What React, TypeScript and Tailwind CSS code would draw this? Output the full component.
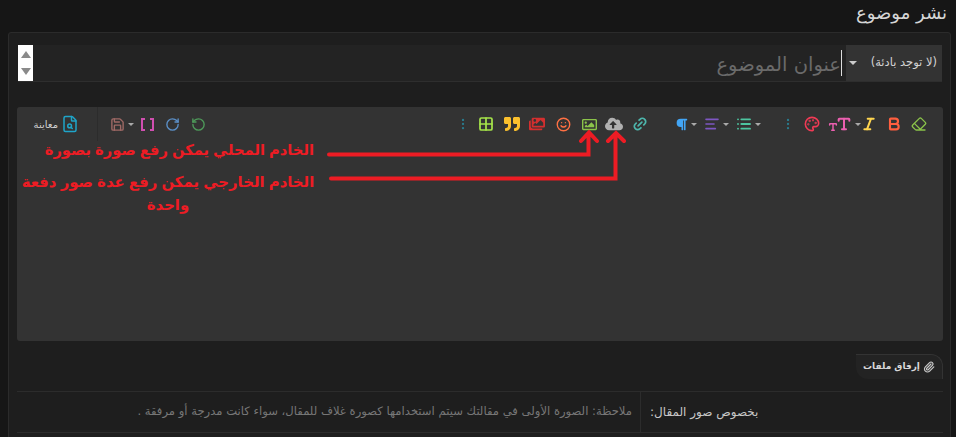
import { Bold, Eraser, FileSearch, Grid2x2, Italic, Link2, List, AlignLeft, Palette, Paperclip, RotateCcw, RotateCw, Save, Smile, Type, EllipsisVertical } from "lucide-react";
import { FaCloudUploadAlt, FaImages, FaParagraph, FaQuoteRight, FaRegImage } from "react-icons/fa";
import type { ReactNode } from "react";

function Caret() {
  return <span className="ml-[3px] inline-block h-0 w-0 border-x-[3px] border-t-[3px] border-x-transparent border-t-[#aaaaaa]" />;
}

function Tool({ className, children, caret }: { className: string; children: ReactNode; caret?: boolean }) {
  return (
    <div dir="ltr" className={`flex h-full shrink-0 items-center justify-center ${className}`}>
      {children}
      {caret && <Caret />}
    </div>
  );
}

export default function App() {
  return (
    <div dir="rtl" className="relative h-[437px] w-[956px] overflow-hidden bg-[#161616] font-['DejaVu_Sans',sans-serif] text-[#cccccc]">
      <h1 className="h-[32px] ps-[9px] text-[18px] leading-[25px] font-normal text-[#d6d6d6]">نشر موضوع</h1>

      <div className="ml-[8px] mr-[5px] h-[420px] rounded-t-[3px] border border-[#2b2b2b] bg-[#1e1e1e] pl-[9px] pr-[8px] pt-[12px]">
        <div className="flex h-[37px] border-b border-[#2e2e2e] bg-[#232323]">
          <div className="flex w-[96px] shrink-0 items-center justify-between bg-[#333333] pe-[3px] ps-[5px] text-[11.5px] text-[#d4d4d4]">
            <span>(لا توجد بادئة)</span>
            <span className="h-0 w-0 border-x-[4px] border-t-[4px] border-x-transparent border-t-[#cccccc]" />
          </div>
          <div className="flex flex-1 items-center ps-[4px]">
            <span className="h-[26px] w-px bg-[#dddddd]" />
            <span className="pt-[3px] text-[19.5px] leading-[26px] text-[#6a6a6a]">عنوان الموضوع</span>
          </div>
          <div className="flex w-[15px] shrink-0 flex-col items-center justify-between bg-white py-[6px]">
            <span className="h-0 w-0 border-x-[5px] border-b-[7px] border-x-transparent border-b-[#8a8a8a]" />
            <span className="h-0 w-0 border-x-[5px] border-t-[7px] border-x-transparent border-t-[#8a8a8a]" />
          </div>
        </div>

        <div className="-ml-px -mr-px mt-[25px] h-[234px] rounded-[3px] bg-[#333333]">
          <div className="flex h-[34px] items-center ps-[11px]">
            <Tool className="w-[26px]"><Eraser size={16} className="text-[#8bc34a]" /></Tool>
            <Tool className="w-[24px]"><Bold size={16} strokeWidth={3.2} className="text-[#ff5f3f]" /></Tool>
            <Tool className="w-[26px]"><Italic size={16} strokeWidth={3} className="text-[#ffd54f]" /></Tool>
            <Tool className="w-[24px]" caret>
              <span className="flex items-end text-[#ec5fb0]">
                <Type size={10} strokeWidth={3.5} />
                <Type size={16} strokeWidth={3} className="-ml-[2px]" />
              </span>
            </Tool>
            <Tool className="w-[40px]"><Palette size={16} strokeWidth={2.4} className="text-[#f23a55]" /></Tool>
            <Tool className="w-[8px]"><EllipsisVertical size={14} className="shrink-0 text-[#2a7a8c]" /></Tool>
            <div className="w-[21px] shrink-0" />
            <Tool className="w-[30px]" caret><List size={16} strokeWidth={2.8} className="text-[#4dc5a0]" /></Tool>
            <Tool className="w-[34px]" caret><AlignLeft size={16} strokeWidth={2.4} className="text-[#7e57c2]" /></Tool>
            <Tool className="w-[26px]" caret><FaParagraph size={13} className="text-[#42a5f5]" /></Tool>
            <div className="w-[19px] shrink-0" />
            <Tool className="w-[28px]"><Link2 size={16} strokeWidth={2.6} className="-rotate-45 text-[#4db6ac]" /></Tool>
            <Tool className="w-[24px]"><FaCloudUploadAlt size={18} className="text-[#b0b0b0]" /></Tool>
            <Tool className="w-[26px]"><FaRegImage size={15} className="text-[#8bc34a]" /></Tool>
            <Tool className="w-[26px]"><Smile size={15} strokeWidth={2.2} className="text-[#ff7043]" /></Tool>
            <Tool className="w-[26px]"><FaImages size={16} className="text-[#d32f2f]" /></Tool>
            <Tool className="w-[24px]"><FaQuoteRight size={16} className="text-[#fbc02d]" /></Tool>
            <Tool className="w-[28px]"><Grid2x2 size={16} strokeWidth={2.6} className="text-[#a5e34a]" /></Tool>
            <Tool className="w-[18px]"><EllipsisVertical size={14} className="text-[#2a7a8c]" /></Tool>
            <div className="flex-1" />
            <Tool className="w-[26px]"><RotateCcw size={15} strokeWidth={2.2} className="text-[#4e9a5a]" /></Tool>
            <Tool className="w-[26px]"><RotateCw size={15} strokeWidth={2.2} className="text-[#5b8fc7]" /></Tool>
            <Tool className="w-[24px]">
              <svg width="13" height="13" viewBox="0 0 13 13" fill="none" stroke="#d04fb0" strokeWidth="2">
                <path d="M4 1H1V12H4M9 1H12V12H9" />
              </svg>
            </Tool>
            <Tool className="w-[26px]" caret><Save size={15} strokeWidth={2.2} className="text-[#a06a66]" /></Tool>
            <div className="w-[11px] shrink-0" />
            <div className="h-full w-px bg-[#2c2c2c]" />
            <div className="flex w-[80px] items-center gap-[3px] ps-[18px]">
              <FileSearch size={18} className="text-[#1fa5c9]" />
              <span className="text-[10px] text-[#cfcfcf]">معاينة</span>
            </div>
          </div>
        </div>

        <div className="-mr-px mt-[13px] flex">
          <div className="flex h-[25px] w-[87px] items-center justify-center gap-[3px] rounded-tr-[12px] rounded-bl-[12px] border-t border-r border-[#333333] bg-[#232323] text-[9px] font-bold text-[#d8d8d8]">
            <Paperclip size={12} strokeWidth={2.4} className="text-[#c8c8c8]" />
            <span>إرفاق ملفات</span>
          </div>
        </div>

        <div className="-ml-px -mr-px mt-[12px] flex h-[42px] border-y border-[#2c2c2c]">
          <div className="flex w-[303px] shrink-0 items-center justify-end border-l border-[#2c2c2c] pl-[9px] text-[12px] text-[#c8c8c8]">
            بخصوص صور المقال:
          </div>
          <div className="flex flex-1 items-center ps-[8px] text-[11.6px] whitespace-nowrap text-[#777777]">
            ملاحظة: الصورة الأولى في مقالتك سيتم استخدامها كصورة غلاف للمقال، سواء كانت مدرجة أو مرفقة .
          </div>
        </div>
      </div>

      {/* annotations pasted on top of the screenshot */}
      <div className="absolute left-[20px] top-[141px] w-[294px] text-right font-['Liberation_Sans','DejaVu_Sans',sans-serif] text-[14.7px] leading-[19px] font-bold text-[#ed1c24]">
        الخادم المحلي يمكن رفع صورة بصورة
      </div>
      <div className="absolute left-[20px] top-[171px] w-[296px] text-center font-['Liberation_Sans','DejaVu_Sans',sans-serif] text-[14.9px] leading-[23px] font-bold text-[#ed1c24]">
        الخادم الخارجي يمكن رفع عدة صور دفعة واحدة
      </div>
      <svg className="absolute left-0 top-0" width="956" height="437" fill="none" stroke="#ed1c24" strokeWidth="4" strokeLinecap="round">
        <path d="M329 154.500H588.500V134M581 141L589 132.500L597 141" />
        <path d="M331 178.500H615.500V135M608 141L616 133L624 141" />
      </svg>
    </div>
  );
}
